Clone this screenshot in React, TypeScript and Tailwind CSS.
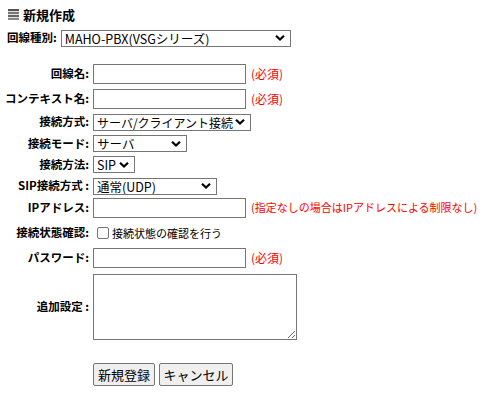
import React from "react";

const font = { fontFamily: '"Noto Sans CJK JP", "Noto Sans", sans-serif' };

function Chevron() {
  return (
    <svg width="10" height="7" viewBox="0 0 10 7" className="pointer-events-none absolute right-[6px] top-1/2 -translate-y-1/2">
      <path d="M1 1.2 L5 5 L9 1.2" fill="none" stroke="#000" strokeWidth="2.2" />
    </svg>
  );
}

function Select({ w, value, size = "text-[12.5px]" }: { w: string; value: string; size?: string }) {
  return (
    <div className={`relative ${w} h-[17px]`}>
      <select
        defaultValue={value}
        className={`block h-[17px] w-full appearance-none rounded-none border border-[#767676] bg-white py-0 pl-[3px] pr-[16px] ${size} leading-[15px] text-black outline-none`}
        style={font}
      >
        <option>{value}</option>
      </select>
      <Chevron />
    </div>
  );
}

function Input() {
  return <input type="text" className="block h-[20px] w-[153px] rounded-none border border-[#767676] bg-white px-1 text-[13px] outline-none" />;
}

function Row({ label, h, children }: { label: string; h: string; children: React.ReactNode }) {
  return (
    <div className={`flex ${h} items-center`}>
      <div className="w-[89px] shrink-0 whitespace-nowrap text-right text-[11.5px] font-bold leading-none text-black">{label}</div>
      <div className="ml-[4px] flex items-center">{children}</div>
    </div>
  );
}

function Req() {
  return <span className="ml-[5px] text-[12px] leading-none text-[#ff0000]">(必須)</span>;
}

export default function App() {
  return (
    <div className="h-[393px] w-[485px] bg-white text-black" style={font}>
      <div className="flex h-[25px] items-end pl-[8px]">
        <svg width="11" height="11" viewBox="0 0 11 11" className="mb-[5px]">
          <rect x="0" y="0" width="11" height="2.2" fill="#555" />
          <rect x="0" y="3" width="11" height="2.2" fill="#777" />
          <rect x="0" y="6" width="11" height="2.2" fill="#666" />
          <rect x="0" y="9" width="11" height="2" fill="#888" />
        </svg>
        <span className="ml-[4px] text-[13px] font-bold leading-[20px]">新規作成</span>
      </div>
      <div className="flex h-[26px] items-center pl-[7px]">
        <span className="text-[11.5px] font-bold leading-none">回線種別:</span>
        <div className="ml-[4px]">
          <Select w="w-[230px]" value="MAHO-PBX(VSGシリーズ)" />
        </div>
      </div>
      <div className="mt-[10px]">
        <Row label="回線名:" h="h-[25px]">
          <Input />
          <Req />
        </Row>
        <Row label="コンテキスト名:" h="h-[25px]">
          <Input />
          <Req />
        </Row>
        <Row label="接続方式:" h="h-[22px]">
          <Select w="w-[158px]" value="サーバ/クライアント接続" size="text-[12px]" />
        </Row>
        <Row label="接続モード:" h="h-[21px]">
          <Select w="w-[94px]" value="サーバ" />
        </Row>
        <Row label="接続方法:" h="h-[21px]">
          <Select w="w-[42px]" value="SIP" />
        </Row>
        <Row label="SIP接続方式 :" h="h-[22px]">
          <Select w="w-[124px]" value="通常(UDP)" />
        </Row>
        <Row label="IPアドレス:" h="h-[21px]">
          <Input />
          <span className="ml-[5px] whitespace-nowrap text-[11px] leading-none text-[#ff0000]">(指定なしの場合はIPアドレスによる制限なし)</span>
        </Row>
        <Row label="接続状態確認:" h="h-[30px]">
          <label className="flex items-center">
            <span className="ml-[4px] inline-block h-[12px] w-[12px] rounded-[2px] border border-[#767676] bg-white" />
            <span className="ml-[3px] text-[11px] leading-none">接続状態の確認を行う</span>
          </label>
        </Row>
        <Row label="パスワード:" h="h-[20px]">
          <Input />
          <Req />
        </Row>
        <Row label="追加設定 :" h="h-[77px]">
          <textarea className="block h-[66px] w-[204px] resize rounded-none border border-[#767676] bg-white outline-none" />
        </Row>
        <div className="mt-[18px] flex pl-[93px]">
          <button className="h-[23px] w-[62px] rounded-[2px] border border-[#767676] bg-[#efefef] text-[13px] leading-none">新規登録</button>
          <button className="ml-[4px] h-[23px] w-[74px] rounded-[2px] border border-[#767676] bg-[#efefef] text-[13px] leading-none">キャンセル</button>
        </div>
      </div>
    </div>
  );
}
